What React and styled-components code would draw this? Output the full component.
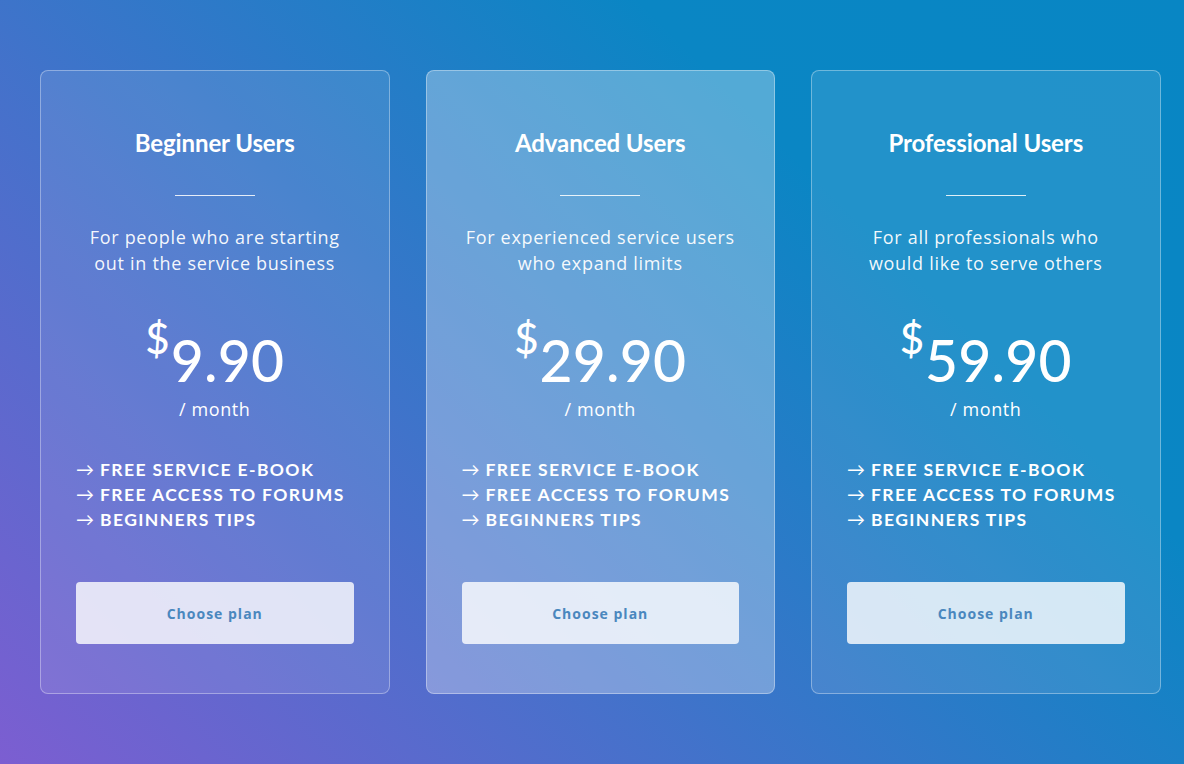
import styled, { createGlobalStyle } from "styled-components";

const GlobalStyle = createGlobalStyle`
  html, body {
    margin: 0;
    padding: 0;
  }
  body {
    font-family: "Open Sans", "Liberation Sans", sans-serif;
  }
`;

const Page = styled.div`
  width: 1184px;
  height: 764px;
  box-sizing: border-box;
  padding: 70px 40px 0;
  background: linear-gradient(45deg, #7c5ed1 0%, #0a86c4 72%, #0886c4 100%);
  display: grid;
  grid-template-columns: repeat(3, 349.5px);
  column-gap: 36px;
  justify-content: start;
  align-items: start;
`;

const Card = styled.div`
  height: 624px;
  box-sizing: border-box;
  border: 1px solid rgba(255, 255, 255, 0.35);
  border-radius: 8px;
  background: ${(p) =>
    p.$featured ? "rgba(255, 255, 255, 0.3)" : "rgba(255, 255, 255, 0.1)"};
  padding: 57px 35px 0;
  display: flex;
  flex-direction: column;
  align-items: center;
  color: #fff;
`;

const Title = styled.h2`
  margin: 0;
  font-family: "Lato", sans-serif;
  font-weight: 700;
  font-size: 24px;
  line-height: 30px;
  letter-spacing: -0.1px;
`;

const Rule = styled.div`
  width: 80px;
  height: 1px;
  background: rgba(255, 255, 255, 0.85);
  margin: 37px 0 28px;
`;

const Description = styled.p`
  margin: 0;
  font-size: 18px;
  line-height: 26px;
  text-align: center;
  letter-spacing: 0.7px;
  color: rgba(255, 255, 255, 0.95);
  white-space: nowrap;
`;

const Price = styled.div`
  margin-top: 40px;
  display: flex;
  align-items: flex-start;
  font-family: "Lato", sans-serif;
  font-weight: 500;
  line-height: 1;
`;

const Currency = styled.span`
  font-size: 42px;
  margin-top: 1px;
  margin-right: 1px;
`;

const Amount = styled.span`
  font-size: 57px;
  margin-top: 16px;
  letter-spacing: 0.2px;
`;

const Period = styled.div`
  margin-top: 7px;
  font-size: 18px;
  line-height: 26px;
  letter-spacing: 0.6px;
`;

const Features = styled.ul`
  list-style: none;
  margin: 35px 0 0;
  padding: 0;
  align-self: stretch;
`;

const Feature = styled.li`
  height: 25px;
  font-family: "Lato", sans-serif;
  font-weight: 700;
  font-size: 17.5px;
  line-height: 25px;
  text-transform: uppercase;
  letter-spacing: 1.4px;
  white-space: nowrap;
`;

const Arrow = styled.span`
  display: inline-block;
  font-family: "Lato", sans-serif;
  font-weight: 400;
  font-size: 18px;
  line-height: 25px;
  vertical-align: top;
  letter-spacing: 0;
  margin-right: 6px;
`;

const Button = styled.button`
  margin-top: auto;
  margin-bottom: 49px;
  align-self: stretch;
  height: 62px;
  border: none;
  border-radius: 4px;
  background: rgba(255, 255, 255, 0.8);
  color: #4a87be;
  font-family: "Open Sans", sans-serif;
  font-weight: 700;
  font-size: 14px;
  letter-spacing: 1px;
  cursor: pointer;
`;

const plans = [
  {
    title: "Beginner Users",
    description: ["For people who are starting", "out in the service business"],
    price: "9.90",
  },
  {
    title: "Advanced Users",
    description: ["For experienced service users", "who expand limits"],
    price: "29.90",
    featured: true,
  },
  {
    title: "Professional Users",
    description: ["For all professionals who", "would like to serve others"],
    price: "59.90",
  },
];

const features = ["Free service e-book", "Free access to forums", "Beginners tips"];

export default function App() {
  return (
    <>
      <GlobalStyle />
      <Page>
        {plans.map((plan) => (
          <Card key={plan.title} $featured={plan.featured}>
            <Title>{plan.title}</Title>
            <Rule />
            <Description>
              {plan.description[0]}
              <br />
              {plan.description[1]}
            </Description>
            <Price>
              <Currency>$</Currency>
              <Amount>{plan.price}</Amount>
            </Price>
            <Period>/ month</Period>
            <Features>
              {features.map((f) => (
                <Feature key={f}>
                  <Arrow>→</Arrow>
                  {f}
                </Feature>
              ))}
            </Features>
            <Button>Choose plan</Button>
          </Card>
        ))}
      </Page>
    </>
  );
}
